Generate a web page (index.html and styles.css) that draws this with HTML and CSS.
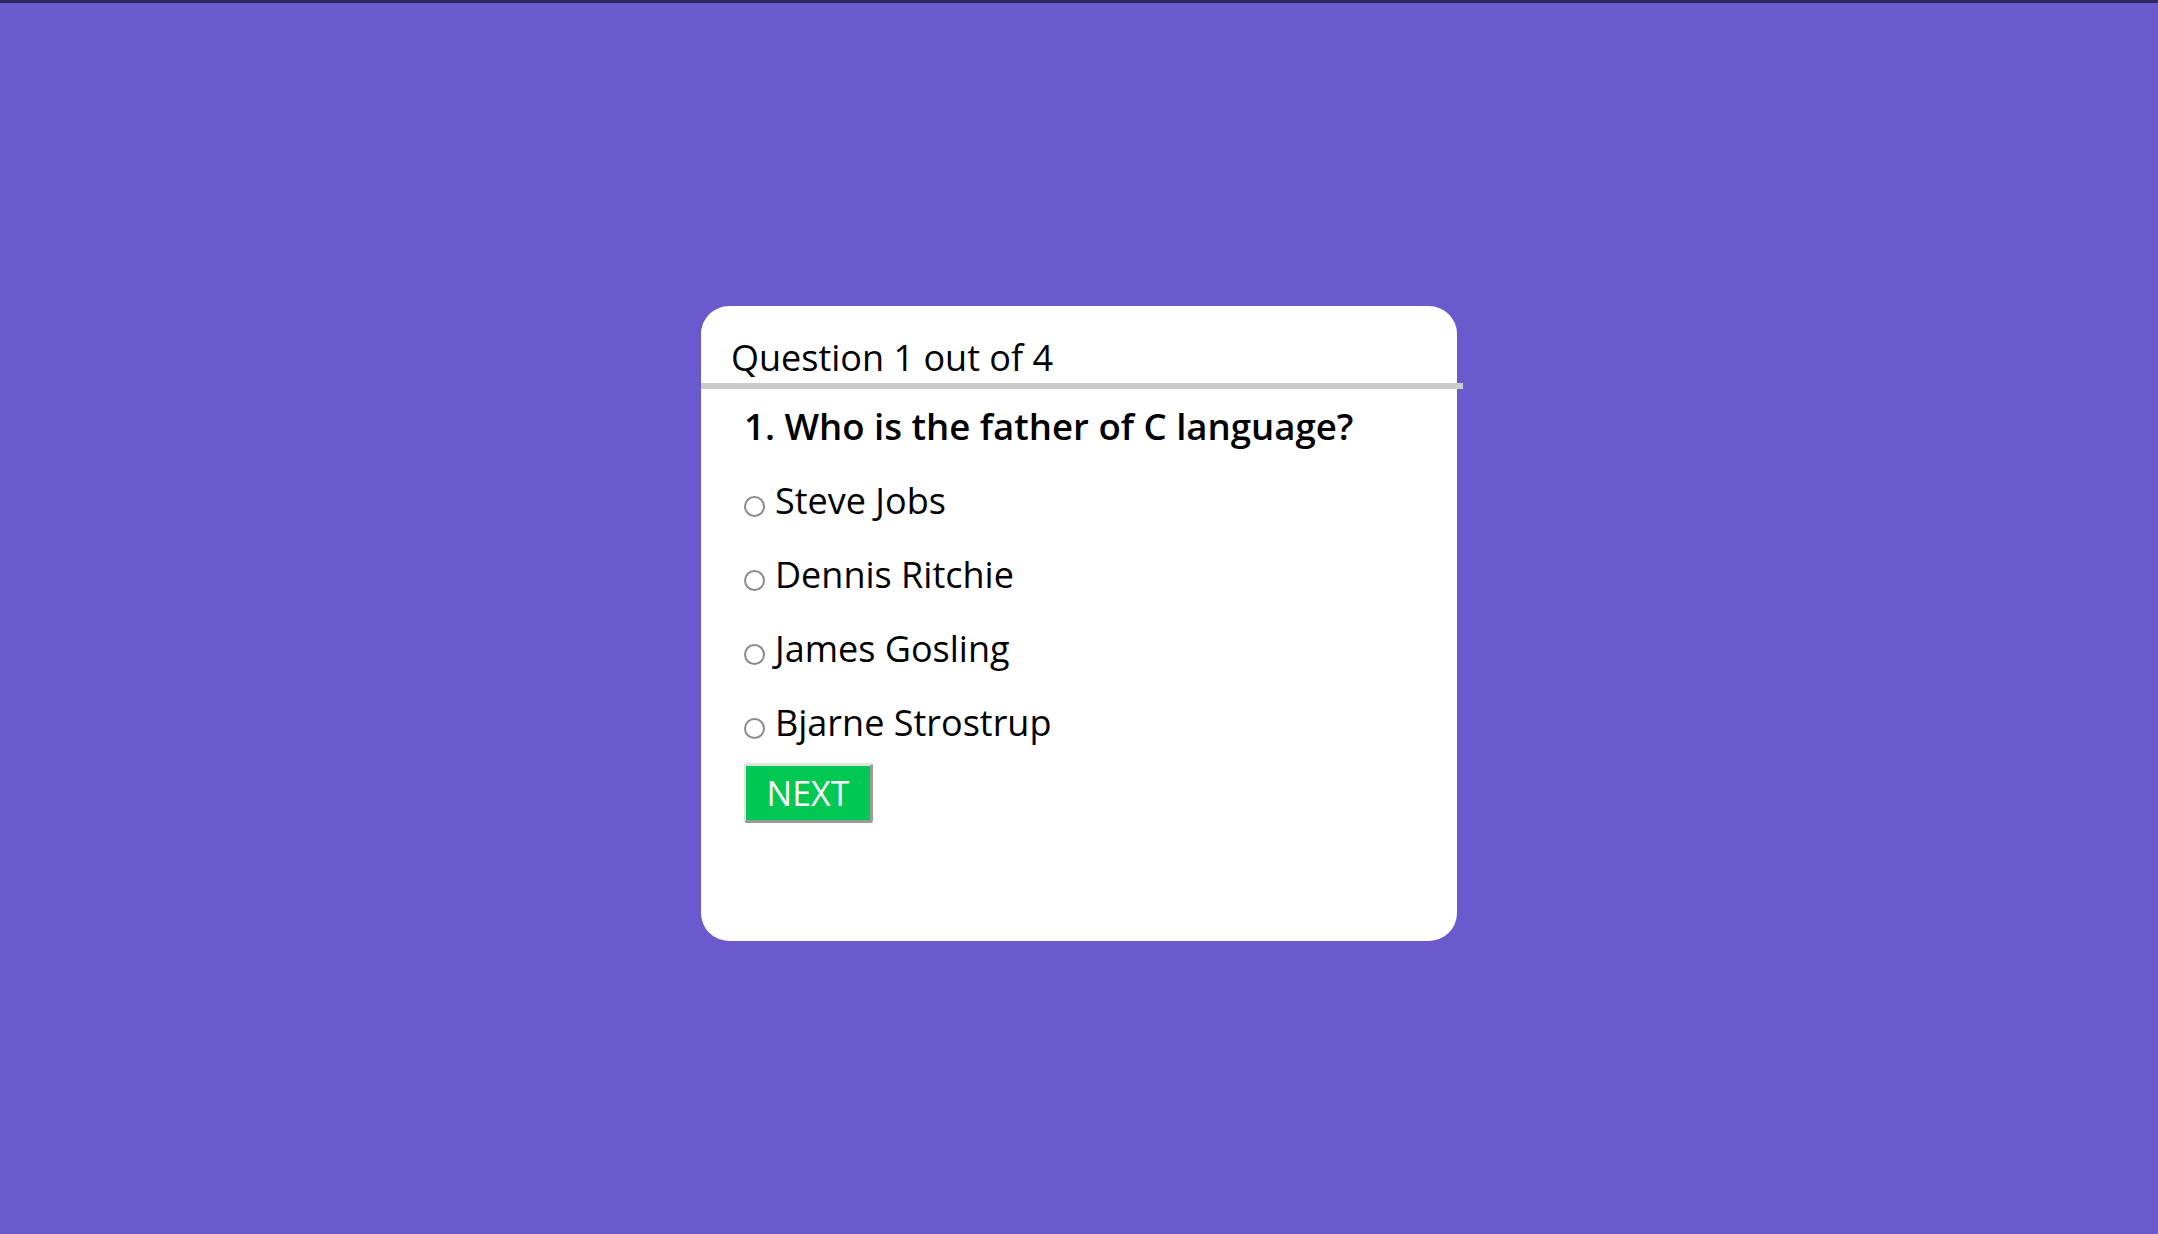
FILE: index.html
```html
<!DOCTYPE html>
<html lang="en">
<head>
<meta charset="utf-8">
<title>Quiz</title>
<link rel="stylesheet" href="styles.css">
</head>
<body>
<div class="topline"></div>
<main class="stage">
  <section class="card">
    <div class="card-head">Question 1 out of 4</div>
    <div class="divider"></div>
    <div class="card-body">
      <h2 class="question">1. Who is the father of C language?</h2>
      <label class="option"><input type="radio" name="q1" class="radio">Steve Jobs</label>
      <label class="option"><input type="radio" name="q1" class="radio">Dennis Ritchie</label>
      <label class="option"><input type="radio" name="q1" class="radio">James Gosling</label>
      <label class="option"><input type="radio" name="q1" class="radio">Bjarne Strostrup</label>
      <button class="next" type="button">NEXT</button>
    </div>
  </section>
</main>
</body>
</html>
```
FILE: styles.css
```css
* { box-sizing: border-box; }
html, body { margin: 0; padding: 0; }
body {
  background: #6a5acd;
  font-family: "Open Sans", "Noto Sans", sans-serif;
  color: #000;
  overflow: hidden;
}
.topline {
  height: 3px;
  background: #2f2660;
}
.stage {
  min-height: 1231px;
  padding-top: 10px;
  display: flex;
  align-items: center;
  justify-content: center;
}
.card {
  width: 756px;
  height: 635px;
  background: #fff;
  border-radius: 28px;
  padding-top: 27px;
}
.card-head {
  font-size: 36px;
  line-height: 49px;
  padding-left: 30px;
}
.divider {
  margin-top: 1px;
  width: calc(100% + 6px);
  height: 6px;
  background: #cbcbcb;
}
.card-body {
  padding-left: 43px;
}
.question {
  margin: 13px 0 0 0;
  font-size: 36.6px;
  font-weight: 600;
  line-height: 48px;
}
.option {
  display: block;
  margin: 0;
  font-size: 36px;
  line-height: 74px;
  height: 74px;
}
.question + .option { margin-top: 14px; }
.radio {
  appearance: none;
  -webkit-appearance: none;
  width: 21px;
  height: 21px;
  margin: 0 10px 0 0;
  border: 2.5px solid #8a8a93;
  border-radius: 50%;
  background: #fff;
  vertical-align: -3px;
}
.next {
  margin-top: 3px;
  width: 129px;
  height: 60px;
  background: #00c853;
  color: #fff;
  font-family: "Open Sans", "Noto Sans", sans-serif;
  font-size: 34px;
  line-height: 1;
  padding: 0;
  border-style: solid;
  border-width: 3px 3px 3px 2px;
  border-color: #e2e2e2 #9a9a9a #9a9a9a #e2e2e2;
  border-radius: 3px;
}
```
